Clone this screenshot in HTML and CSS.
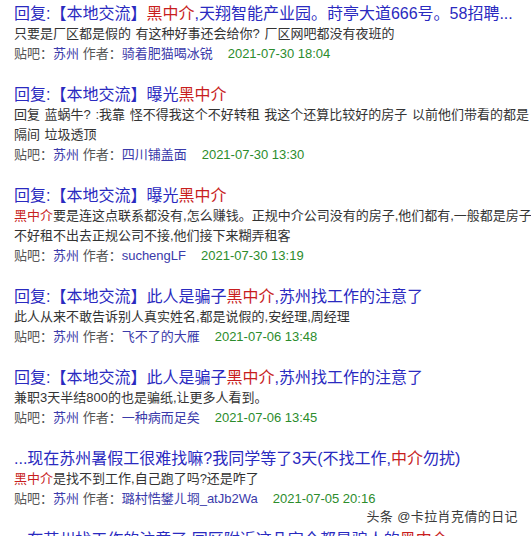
FILE: index.html
```html
<!DOCTYPE html>
<html lang="zh-CN">
<head>
  <meta charset="UTF-8" />
  <title>贴吧搜索结果 – 黑中介</title>
  <link rel="stylesheet" href="styles.css">
</head>
<body>

  <div class="results">

    <div class="result">
      <a class="title" href="#">回复:【本地交流】<em>黑中介</em>,天翔智能产业园。莳亭大道666号。58招聘...</a>
      <p class="text">只要是厂区都是假的 有这种好事还会给你? 厂区网吧都没有夜班的</p>
      <p class="meta">贴吧：<a href="#">苏州</a> 作者：<a href="#">骑着肥猫喝冰锐</a><span class="date">2021-07-30 18:04</span></p>
    </div>

    <div class="result">
      <a class="title" href="#">回复:【本地交流】曝光<em>黑中介</em></a>
      <p class="text">回复 蓝蜗牛? :我靠 怪不得我这个不好转租 我这个还算比较好的房子 以前他们带看的都是隔间 垃圾透顶</p>
      <p class="meta">贴吧：<a href="#">苏州</a> 作者：<a href="#">四川铺盖面</a><span class="date">2021-07-30 13:30</span></p>
    </div>

    <div class="result">
      <a class="title" href="#">回复:【本地交流】曝光<em>黑中介</em></a>
      <p class="text"><em>黑中介</em>要是连这点联系都没有,怎么赚钱。正规中介公司没有的房子,他们都有,一般都是房子不好租不出去正规公司不接,他们接下来糊弄租客</p>
      <p class="meta">贴吧：<a href="#">苏州</a> 作者：<a href="#">suchengLF</a><span class="date">2021-07-30 13:19</span></p>
    </div>

    <div class="result">
      <a class="title" href="#">回复:【本地交流】此人是骗子<em>黑中介</em>,苏州找工作的注意了</a>
      <p class="text">此人从来不敢告诉别人真实姓名,都是说假的,安经理,周经理</p>
      <p class="meta">贴吧：<a href="#">苏州</a> 作者：<a href="#">飞不了的大雁</a><span class="date">2021-07-06 13:48</span></p>
    </div>

    <div class="result">
      <a class="title" href="#">回复:【本地交流】此人是骗子<em>黑中介</em>,苏州找工作的注意了</a>
      <p class="text">兼职3天半结800的也是骗纸,让更多人看到。</p>
      <p class="meta">贴吧：<a href="#">苏州</a> 作者：<a href="#">一种病而足矣</a><span class="date">2021-07-06 13:45</span></p>
    </div>

    <div class="result">
      <a class="title" href="#">...现在苏州暑假工很难找嘛?我同学等了3天(不找工作,<em>中介</em>勿扰)</a>
      <p class="text"><em>黑中介</em>是找不到工作,自己跑了吗?还是咋了</p>
      <p class="meta">贴吧：<a href="#">苏州</a> 作者：<a href="#">璐村悎鐢ㄦ埛_atJb2Wa</a><span class="date">2021-07-05 20:16</span></p>
    </div>

    <div class="result">
      <a class="title" href="#">...在苏州找工作的注意了,园区附近这几家全都是骗人的<em>黑中介</em></a>
      <p class="text">都是交了钱就不管了</p>
    </div>

  </div>

  <!-- Wasserzeichen unten rechts -->
  <div class="watermark">头条 @卡拉肖克倩的日记</div>

</body>
</html>
```

FILE: styles.css
```css
html, body {
  overflow: hidden;
}
body {
  margin: 0;
  background: #fff;
  font-family: "Liberation Sans", "Noto Sans CJK SC", sans-serif;
  color: #333;
}

/* Ergebnisliste */
.results {
  width: 519px;
  padding: 3px 0 0 14px;
}
.result {
  margin-bottom: 20px;
}
.result em {
  font-style: normal;
  color: #c81e1e;
}
.title {
  display: block;
  font-size: 16px;
  line-height: 21px;
  color: #2a2ac0;
  text-decoration: none;
}
.text {
  margin: 0;
  font-size: 13px;
  line-height: 20px;
  word-spacing: 1px;
  color: #333;
}
.meta {
  margin: 0;
  font-size: 13px;
  line-height: 20px;
  color: #555;
}
.meta a {
  color: #3a3aaa;
  text-decoration: none;
}
.date {
  margin-left: 15px;
  color: #2c8c2c;
}

/* Wasserzeichen */
.watermark {
  position: absolute;
  right: 13px;
  top: 507px;
  font-size: 13px;
  line-height: 20px;
  letter-spacing: 0.4px;
  color: #3a3a3a;
  text-shadow: 0 0 2px #fff, 0 0 2px #fff;
}
```
